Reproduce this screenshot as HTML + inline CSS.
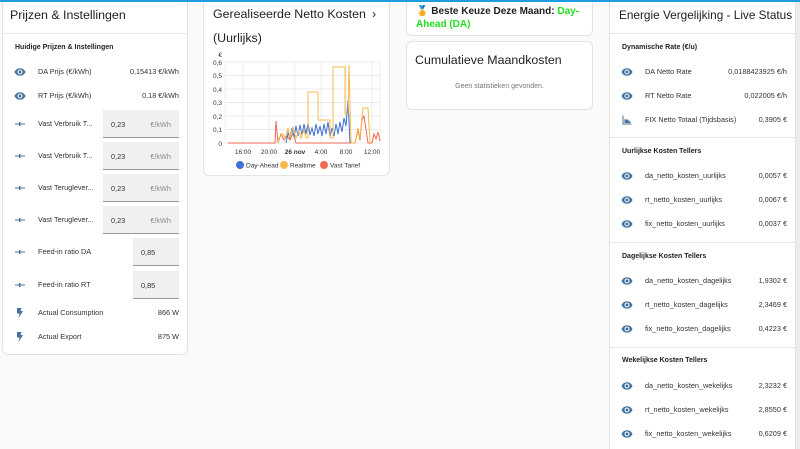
<!DOCTYPE html><html><head><meta charset="utf-8"><style>
*{box-sizing:border-box;margin:0;padding:0}
html,body{width:800px;height:449px;overflow:hidden}
body{background:#fafafa;font-family:"Liberation Sans",sans-serif;color:#212121;position:relative}
.bar{position:absolute;left:0;top:0;width:800px;height:2px;background:#1d9ce0;z-index:5}
.card{position:absolute;background:#fff;border:1px solid #e3e3e3;border-radius:6px;overflow:hidden}
.h{position:absolute;font-size:12.4px;color:#212121;white-space:nowrap}
.div{position:absolute;left:0;right:0;height:1px;background:#e8e8e8}
.sec{position:absolute;font-size:7px;font-weight:bold;color:#212121}
.row{position:absolute;left:0;right:0;height:14px;font-size:7.3px;color:#333;white-space:nowrap}
.row .ic{position:absolute;left:11px;top:1px}
.row .n{position:absolute;left:35px;top:2px}
.row .v{position:absolute;right:8px;top:2px}
.inp{position:absolute;right:8px;height:28px;background:#f0f0f0;border-bottom:1px solid #999;font-size:7.3px;color:#333}
.inp span{position:absolute;top:10px}
</style></head><body>
<svg width="0" height="0" style="position:absolute"><defs>
<symbol id="eye" viewBox="0 0 24 24"><path fill="#44739e" d="M12 4.5C7 4.5 2.7 7.6 1 12c1.7 4.4 6 7.5 11 7.5s9.3-3.1 11-7.5c-1.7-4.4-6-7.5-11-7.5zM12 17a5 5 0 110-10 5 5 0 010 10zm0-8a3 3 0 100 6 3 3 0 000-6z"/></symbol>
<symbol id="sl" viewBox="0 0 24 24"><path fill="#44739e" d="M2 11h20v2H2z"/><rect x="10" y="8" width="3" height="8" fill="#44739e"/></symbol>
<symbol id="fl" viewBox="0 0 24 24"><path fill="#44739e" d="M6 2h9l-2 6h5l-9 14 2-9H6z"/></symbol>
<symbol id="ch" viewBox="0 0 24 24"><path fill="#44739e" d="M3 3h2v16h16v2H3zM7 18V9l3 3 3-2 3 4 3 1v3z"/></symbol>
</defs></svg>

<div class="card" style="left:2px;top:-6px;width:186px;height:361px">
<div class="h" style="left:7px;top:13px">Prijzen &amp; Instellingen</div>
<div class="div" style="top:38px"></div>
<div class="sec" style="left:12px;top:49px">Huidige Prijzen &amp; Instellingen</div>
<div class="row" style="top:70px"><svg class="ic" width="12" height="12"><use href="#eye"/></svg><span class="n">DA Prijs (€/kWh)</span><span class="v">0,15413 €/kWh</span></div>
<div class="row" style="top:94px"><svg class="ic" width="12" height="12"><use href="#eye"/></svg><span class="n">RT Prijs (€/kWh)</span><span class="v">0,18 €/kWh</span></div>
<div class="row" style="top:122px"><svg class="ic" width="12" height="12"><use href="#sl"/></svg><span class="n">Vast Verbruik T...</span></div>
<div class="inp" style="top:115px;left:100px"><span style="left:8px">0,23</span><span style="right:8px;color:#888">€/kWh</span></div>
<div class="row" style="top:154px"><svg class="ic" width="12" height="12"><use href="#sl"/></svg><span class="n">Vast Verbruik T...</span></div>
<div class="inp" style="top:147px;left:100px"><span style="left:8px">0,23</span><span style="right:8px;color:#888">€/kWh</span></div>
<div class="row" style="top:186px"><svg class="ic" width="12" height="12"><use href="#sl"/></svg><span class="n">Vast Teruglever...</span></div>
<div class="inp" style="top:179px;left:100px"><span style="left:8px">0,23</span><span style="right:8px;color:#888">€/kWh</span></div>
<div class="row" style="top:218px"><svg class="ic" width="12" height="12"><use href="#sl"/></svg><span class="n">Vast Teruglever...</span></div>
<div class="inp" style="top:211px;left:100px"><span style="left:8px">0,23</span><span style="right:8px;color:#888">€/kWh</span></div>
<div class="row" style="top:250px"><svg class="ic" width="12" height="12"><use href="#sl"/></svg><span class="n">Feed-in ratio DA</span></div>
<div class="inp" style="top:243px;left:130px"><span style="left:8px">0,85</span></div>
<div class="row" style="top:283px"><svg class="ic" width="12" height="12"><use href="#sl"/></svg><span class="n">Feed-in ratio RT</span></div>
<div class="inp" style="top:276px;left:130px"><span style="left:8px">0,85</span></div>
<div class="row" style="top:311px"><svg class="ic" width="12" height="12"><use href="#fl"/></svg><span class="n">Actual Consumption</span><span class="v">866 W</span></div>
<div class="row" style="top:335px"><svg class="ic" width="12" height="12"><use href="#fl"/></svg><span class="n">Actual Export</span><span class="v">875 W</span></div>
</div>

<div class="card" style="left:203px;top:-6px;width:187px;height:182px">
<div class="h" style="left:9px;top:12px">Gerealiseerde Netto Kosten</div>
<div class="h" style="left:168px;top:12px">›</div>
<div class="h" style="left:9px;top:36px">(Uurlijks)</div>
<svg style="position:absolute;left:-1px;top:5px" width="187" height="176" viewBox="203 0 187 176">
<g stroke="#e6e6e6" stroke-width="0.7">
<line x1="225" y1="62" x2="380" y2="62"/><line x1="225" y1="75.5" x2="380" y2="75.5"/><line x1="225" y1="89" x2="380" y2="89"/><line x1="225" y1="102.5" x2="380" y2="102.5"/><line x1="225" y1="116" x2="380" y2="116"/><line x1="225" y1="129.5" x2="380" y2="129.5"/><line x1="225" y1="143" x2="380" y2="143"/>
<line x1="225" y1="62" x2="225" y2="143"/><line x1="243" y1="62" x2="243" y2="143"/><line x1="269" y1="62" x2="269" y2="143"/><line x1="295" y1="62" x2="295" y2="143"/><line x1="321" y1="62" x2="321" y2="143"/><line x1="346" y1="62" x2="346" y2="143"/><line x1="372" y1="62" x2="372" y2="143"/><line x1="380" y1="62" x2="380" y2="143"/>
</g>
<g font-size="6.5" fill="#333" text-anchor="end">
<text x="222" y="57">€</text><text x="222" y="65">0,6</text><text x="222" y="78">0,5</text><text x="222" y="92">0,4</text><text x="222" y="105">0,3</text><text x="222" y="119">0,2</text><text x="222" y="132">0,1</text><text x="222" y="146">0</text>
</g>
<g font-size="6.5" fill="#333" text-anchor="middle">
<text x="243" y="154">16:00</text><text x="269" y="154">20:00</text><text x="295" y="154" font-weight="bold">26 nov</text><text x="321" y="154">4:00</text><text x="346" y="154">8:00</text><text x="372" y="154">12:00</text>
</g>
<polyline fill="none" stroke="#ef6b4f" stroke-width="1" points="228,143 275,143 276,121 278,143 281,134 284,140 287,136 290,140 293,133 296,143 350,143 355,143 358,130 360,140 362,120 364,116 368,143 372,143 374,134 376,139 378,132 380,141"/>
<polyline fill="none" stroke="#4171d6" stroke-width="1" points="286,143 288,133 290,138 292,128 294,137 296,126 298,136 300,125 302,135 304,124 306,134 308,123 310,135 312,128 314,136 316,124 318,134 320,126 322,136 324,124 326,134 328,122 330,137 332,128 334,136 336,124 338,134 340,122 342,132 344,118 346,126 348,100 350,143"/>
<polyline fill="none" stroke="#f7b84a" stroke-width="1" points="278,143 279,138 283,134 285,138 288,128 290,138 293,127 296,138 299,131 301,138 304,130 306,138 308,138 308,92 318,92 318,120 330,120 330,138 333,138 333,67 345,67 345,114 348,114 349,65 351,143 355,143 358,128 360,138 363,108 368,108 370,143"/>
<g font-size="6.5" fill="#333">
<circle cx="240" cy="165" r="4" fill="#4171d6"/><text x="246" y="167.5">Day-Ahead</text>
<circle cx="284" cy="165" r="4" fill="#f7b84a"/><text x="290" y="167.5">Realtime</text>
<circle cx="324" cy="165" r="4" fill="#ef6b4f"/><text x="330" y="167.5">Vast Tarief</text>
</g>
</svg>
</div>

<div class="card" style="left:406px;top:-6px;width:187px;height:42px">
<div style="position:absolute;left:9px;top:10px;font-size:10px;font-weight:bold;line-height:13px;width:175px">🏅 Beste Keuze Deze Maand: <span style="color:#22e022">Day-Ahead (DA)</span></div>
</div>
<div class="card" style="left:406px;top:41px;width:187px;height:69px">
<div class="h" style="left:8px;top:11px">Cumulatieve Maandkosten</div>
<div style="position:absolute;left:0;right:0;top:41px;text-align:center;font-size:7px;color:#777">Geen statistieken gevonden.</div>
</div>

<div class="card" style="left:609px;top:-6px;width:187px;height:470px">
<div class="h" style="left:9px;top:13px;font-size:11.8px">Energie Vergelijking - Live Status</div>
<div class="div" style="top:38px"></div>
<div class="sec" style="left:12px;top:49px">Dynamische Rate (€/u)</div>
<div class="row" style="top:70px"><svg class="ic" width="12" height="12"><use href="#eye"/></svg><span class="n">DA Netto Rate</span><span class="v">0,0188423925 €/h</span></div>
<div class="row" style="top:94px"><svg class="ic" width="12" height="12"><use href="#eye"/></svg><span class="n">RT Netto Rate</span><span class="v">0,022005 €/h</span></div>
<div class="row" style="top:118px"><svg class="ic" width="12" height="12"><use href="#ch"/></svg><span class="n">FIX Netto Totaal (Tijdsbasis)</span><span class="v">0,3905 €</span></div>
<div class="div" style="top:142px"></div>
<div class="sec" style="left:12px;top:153px">Uurlijkse Kosten Tellers</div>
<div class="row" style="top:174px"><svg class="ic" width="12" height="12"><use href="#eye"/></svg><span class="n">da_netto_kosten_uurlijks</span><span class="v">0,0057 €</span></div>
<div class="row" style="top:198px"><svg class="ic" width="12" height="12"><use href="#eye"/></svg><span class="n">rt_netto_kosten_uurlijks</span><span class="v">0,0067 €</span></div>
<div class="row" style="top:222px"><svg class="ic" width="12" height="12"><use href="#eye"/></svg><span class="n">fix_netto_kosten_uurlijks</span><span class="v">0,0037 €</span></div>
<div class="div" style="top:247px"></div>
<div class="sec" style="left:12px;top:258px">Dagelijkse Kosten Tellers</div>
<div class="row" style="top:279px"><svg class="ic" width="12" height="12"><use href="#eye"/></svg><span class="n">da_netto_kosten_dagelijks</span><span class="v">1,9302 €</span></div>
<div class="row" style="top:303px"><svg class="ic" width="12" height="12"><use href="#eye"/></svg><span class="n">rt_netto_kosten_dagelijks</span><span class="v">2,3469 €</span></div>
<div class="row" style="top:327px"><svg class="ic" width="12" height="12"><use href="#eye"/></svg><span class="n">fix_netto_kosten_dagelijks</span><span class="v">0,4223 €</span></div>
<div class="div" style="top:352px"></div>
<div class="sec" style="left:12px;top:362px">Wekelijkse Kosten Tellers</div>
<div class="row" style="top:384px"><svg class="ic" width="12" height="12"><use href="#eye"/></svg><span class="n">da_netto_kosten_wekelijks</span><span class="v">2,3232 €</span></div>
<div class="row" style="top:408px"><svg class="ic" width="12" height="12"><use href="#eye"/></svg><span class="n">rt_netto_kosten_wekelijks</span><span class="v">2,8550 €</span></div>
<div class="row" style="top:432px"><svg class="ic" width="12" height="12"><use href="#eye"/></svg><span class="n">fix_netto_kosten_wekelijks</span><span class="v">0,6209 €</span></div>
</div>
<div style="position:absolute;left:796px;top:0;width:4px;height:449px;background:#ececec"></div>
<div class="bar"></div>
</body></html>
